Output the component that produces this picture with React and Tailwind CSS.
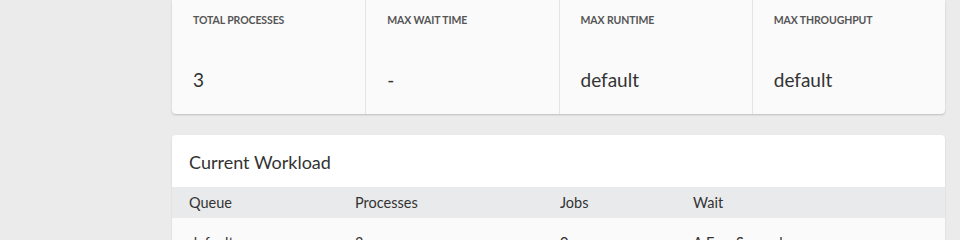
import React from 'react';

const stats = [
  { label: 'Total Processes', value: '3' },
  { label: 'Max Wait Time', value: '-' },
  { label: 'Max Runtime', value: 'default' },
  { label: 'Max Throughput', value: 'default' },
];

const workload = [{ queue: 'default', processes: '3', jobs: '0', wait: 'A Few Seconds' }];

export default function App() {
  return (
    <div
      className="h-[240px] w-[960px] overflow-hidden bg-[#ebebeb] pl-[172px] text-[#333]"
      style={{ fontFamily: 'Lato, "Open Sans", sans-serif' }}
    >
      <div className="w-[773px]">
        <section className="grid h-[114px] grid-cols-4 rounded-b-[4px] bg-[#fafafa] shadow-[0_1px_2px_rgba(0,0,0,0.2)]">
          {stats.map((stat, i) => (
            <div key={stat.label} className={`px-[21px] pt-[14px] ${i > 0 ? 'border-l border-[#e4e4e4]' : ''}`}>
              <p className="text-[10.5px] font-bold uppercase leading-[12px] tracking-[-0.1px] text-[#555]">{stat.label}</p>
              <p className="mt-[42px] text-[19px] leading-[24px] text-[#333]">{stat.value}</p>
            </div>
          ))}
        </section>

        <section className="mt-[21px] overflow-hidden rounded-t-[4px] bg-white shadow-[0_1px_2px_rgba(0,0,0,0.12)]">
          <h2 className="flex h-[52px] items-center px-[17px] pt-[2px] text-[18px] text-[#333]">Current Workload</h2>
          <table className="w-full border-collapse text-left text-[14.5px]">
            <thead>
              <tr className="h-[31px] bg-[#e9eaec]">
                <th className="w-[183px] pl-[17px] font-normal">Queue</th>
                <th className="w-[205px] font-normal">Processes</th>
                <th className="w-[133px] font-normal">Jobs</th>
                <th className="font-normal">Wait</th>
              </tr>
            </thead>
            <tbody>
              {workload.map((row) => (
                <tr key={row.queue} className="bg-[#fafafa]">
                  <td className="pb-[15px] pl-[17px] pt-[14px]">{row.queue}</td>
                  <td className="pb-[15px] pt-[14px]">{row.processes}</td>
                  <td className="pb-[15px] pt-[14px]">{row.jobs}</td>
                  <td className="pb-[15px] pt-[14px]">{row.wait}</td>
                </tr>
              ))}
            </tbody>
          </table>
        </section>
      </div>
    </div>
  );
}
